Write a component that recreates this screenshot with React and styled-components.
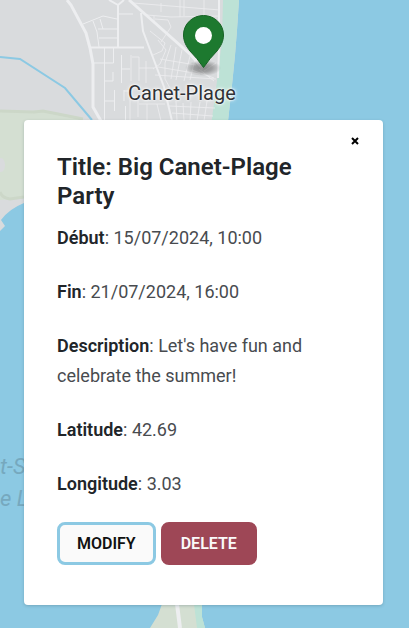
import React from "react";
import styled, { createGlobalStyle } from "styled-components";

const GlobalStyle = createGlobalStyle`
  *, *::before, *::after { box-sizing: border-box; }
  body { margin: 0; background: #8cc9e3; font-family: Roboto, sans-serif; }
`;

const Page = styled.main`
  position: relative;
  min-height: 100vh;
  padding: 120px 26px 22px 24px;
  overflow: hidden;
  background: #8cc9e3;
`;

const MapLayer = styled.svg`
  position: absolute;
  top: 0;
  left: 0;
  display: block;
`;

const Town = styled.span`
  position: absolute;
  top: 81px;
  left: 128px;
  font-size: 20px;
  line-height: 24px;
  color: #303236;
  white-space: nowrap;
  text-shadow: 0 0 2px #fff, 0 0 2px #fff, 0 0 4px #fff;
`;

const WaterName = styled.span`
  position: absolute;
  top: 451px;
  left: 0;
  font-size: 22px;
  line-height: 32px;
  font-style: italic;
  white-space: pre;
  color: #76a8be;
`;

const Pin = styled.svg`
  position: absolute;
  top: 12px;
  left: 178px;
`;

const Card = styled.section`
  position: relative;
  padding: 33px 33px 40px;
  background: #fff;
  border-radius: 4px;
  box-shadow: 0 1px 3px rgba(40, 70, 85, 0.25);
  color: #212529;
`;

const CloseButton = styled.button`
  position: absolute;
  top: 11px;
  right: 18px;
  width: 20px;
  height: 20px;
  padding: 0;
  display: grid;
  place-items: center;
  border: 0;
  background: transparent;
  color: #000;
  cursor: pointer;
`;

const Title = styled.h2`
  margin: 0 0 12px;
  font-size: 24px;
  font-weight: 600;
  line-height: 29px;
`;

const Details = styled.dl`
  display: grid;
  gap: 24px;
  margin: 0 0 23px;
`;

const Detail = styled.div`
  font-size: 18px;
  line-height: 30px;
`;

const Label = styled.dt`
  display: inline;
  font-weight: 600;
`;

const Value = styled.dd`
  display: inline;
  margin: 0;
  font-weight: 400;
  color: #484b4f;
`;

const Actions = styled.div`
  display: flex;
  gap: 5px;
`;

const ActionButton = styled.button`
  height: 43px;
  padding: 0 17px;
  border: 3px solid ${({ $danger }) => ($danger ? "#9e4756" : "#8cc9e3")};
  border-radius: 8px;
  background: ${({ $danger }) => ($danger ? "#9e4756" : "#fafafa")};
  color: ${({ $danger }) => ($danger ? "#fafafa" : "#111")};
  font-family: inherit;
  font-size: 16px;
  font-weight: 600;
  text-transform: uppercase;
  cursor: pointer;
`;

const details = [
  ["Début", "15/07/2024, 10:00"],
  ["Fin", "21/07/2024, 16:00"],
  ["Description", "Let's have fun and celebrate the summer!"],
  ["Latitude", "42.69"],
  ["Longitude", "3.03"],
];

function CoastMap() {
  return (
    <MapLayer width="409" height="628" viewBox="0 0 409 628" aria-hidden="true">
      <path d="M0 0H239L237 30L235 55L232 85L228 121L224 170H60V194L24 203Q9 209 1 220L5 226L0 231Z" fill="#d9dbdd" />
      <path d="M223 0H239L237 30L235 55L232 85L228 121L224 170H205L217 81L222 40Z" fill="#bde2d6" />
      <path d="M0 111L24 112L40 110L57 114L83 119V198H24L0 200Z" fill="#d4dfd2" />
      <path d="M0 111L34 112L43 111L58 114L83 119M0 192Q2 198 10 199L24 197" fill="none" stroke="#ccd7c8" strokeWidth="3" />
      <ellipse cx="1" cy="165" rx="4" ry="7" fill="#d9dbdd" />
      <path d="M0 57L20 59L65 88L92 120" fill="none" stroke="#8cc9e3" strokeWidth="2" />
      <g fill="none" stroke="#edeef0" strokeWidth="1">
        <path strokeWidth="3" d="M67 0L71 5L86 33L90 48L93 64L93 107L101 121" />
        <path strokeWidth="3" d="M129 0L146 15L191 55L203 69" />
        <path strokeWidth="2" d="M90 47.500H144M141 13L143 31L152 55L164 87L172 121M219 0V49L218 78M118 5L109 0M118 5L124 0M118 5V47" />
        <path d="M83 24L103 16L117 19M93 21L97 32L99 47M100 19L103 29M98 29H117M99 38H117M118 14H133M104.500 48V121M113.500 48V63H94M105 81H113V72M121.500 55V83M122 69H130M114.500 90V111M105 101H114M125.500 106V121M124 90V101M124 91H130" />
        <path strokeOpacity="0.8" d="M133 3L220 10M147 15L171 17L220 16M154 16V23M161 3V12M180 0V17M184 0V16M204 0V26M155 19L168 20L171 27L161 42M150 31L165 43L162 51L153 55M158 40L166 50L160 64L153 69M131 55V81M132 57H139V81M146 61V83M139 68H154M130 93V121M138 96V117M147 104V121M157 104L161 121M139 104H165M171 45L165 63L165 79M176 47L171 79M182 50L176 80M190 56L184 81M195 59L190 80M160 59L196 65M158 67L200 74M155 75L216 79M176 101L177 121M183 103L184 121M191 102L190 121M200 102L197 121M207 101L204 121M169 106L215 108M172 113L213 116M165 79L170 88M192 70L214 78M199 69L214 81M204 71L216 63" />
      </g>
      <path d="M162 604H202V617L205 628H150L158 615Z" fill="#d4dfd2" />
      <path d="M194 604H202V617L205 628H197Z" fill="#bde2d6" />
      <path d="M177 604L180 628" stroke="#edeef0" strokeWidth="4" />
    </MapLayer>
  );
}

function MapPin() {
  return (
    <Pin width="54" height="66" viewBox="0 0 54 66" role="img" aria-label="Canet-Plage">
      <defs>
        <radialGradient id="pin-shadow">
          <stop offset="0" stopColor="#333" stopOpacity="0.5" />
          <stop offset="0.5" stopColor="#333" stopOpacity="0.35" />
          <stop offset="1" stopColor="#333" stopOpacity="0" />
        </radialGradient>
      </defs>
      <ellipse cx="25" cy="56" rx="18" ry="8" fill="url(#pin-shadow)" />
      <path d="M25.500 3.500C14.500 3.500 5.500 12 5.500 23C5.500 29 8 34 12 39Q19 46 25.500 55.500Q32 46 39 39C43 34 45.500 29 45.500 23C45.500 12 36.500 3.500 25.500 3.500Z" fill="#1d792f" stroke="#176326" />
      <circle cx="25.500" cy="23.500" r="8.500" fill="#fff" />
    </Pin>
  );
}

export default function App() {
  return (
    <>
      <GlobalStyle />
      <Page>
        <CoastMap />
        <WaterName>{"t-S\ne L"}</WaterName>
        <MapPin />
        <Town>Canet-Plage</Town>
        <Card aria-labelledby="event-title">
          <CloseButton type="button" aria-label="Close">
            <svg width="8" height="8" viewBox="0 0 8 8" aria-hidden="true">
              <path d="M1 1L7 7M7 1L1 7" stroke="currentColor" strokeWidth="2" />
            </svg>
          </CloseButton>
          <Title id="event-title">Title: Big Canet-Plage Party</Title>
          <Details>
            {details.map(([label, value]) => (
              <Detail key={label}>
                <Label>{label}</Label>
                <Value>: {value}</Value>
              </Detail>
            ))}
          </Details>
          <Actions>
            <ActionButton type="button">Modify</ActionButton>
            <ActionButton type="button" $danger>Delete</ActionButton>
          </Actions>
        </Card>
      </Page>
    </>
  );
}
